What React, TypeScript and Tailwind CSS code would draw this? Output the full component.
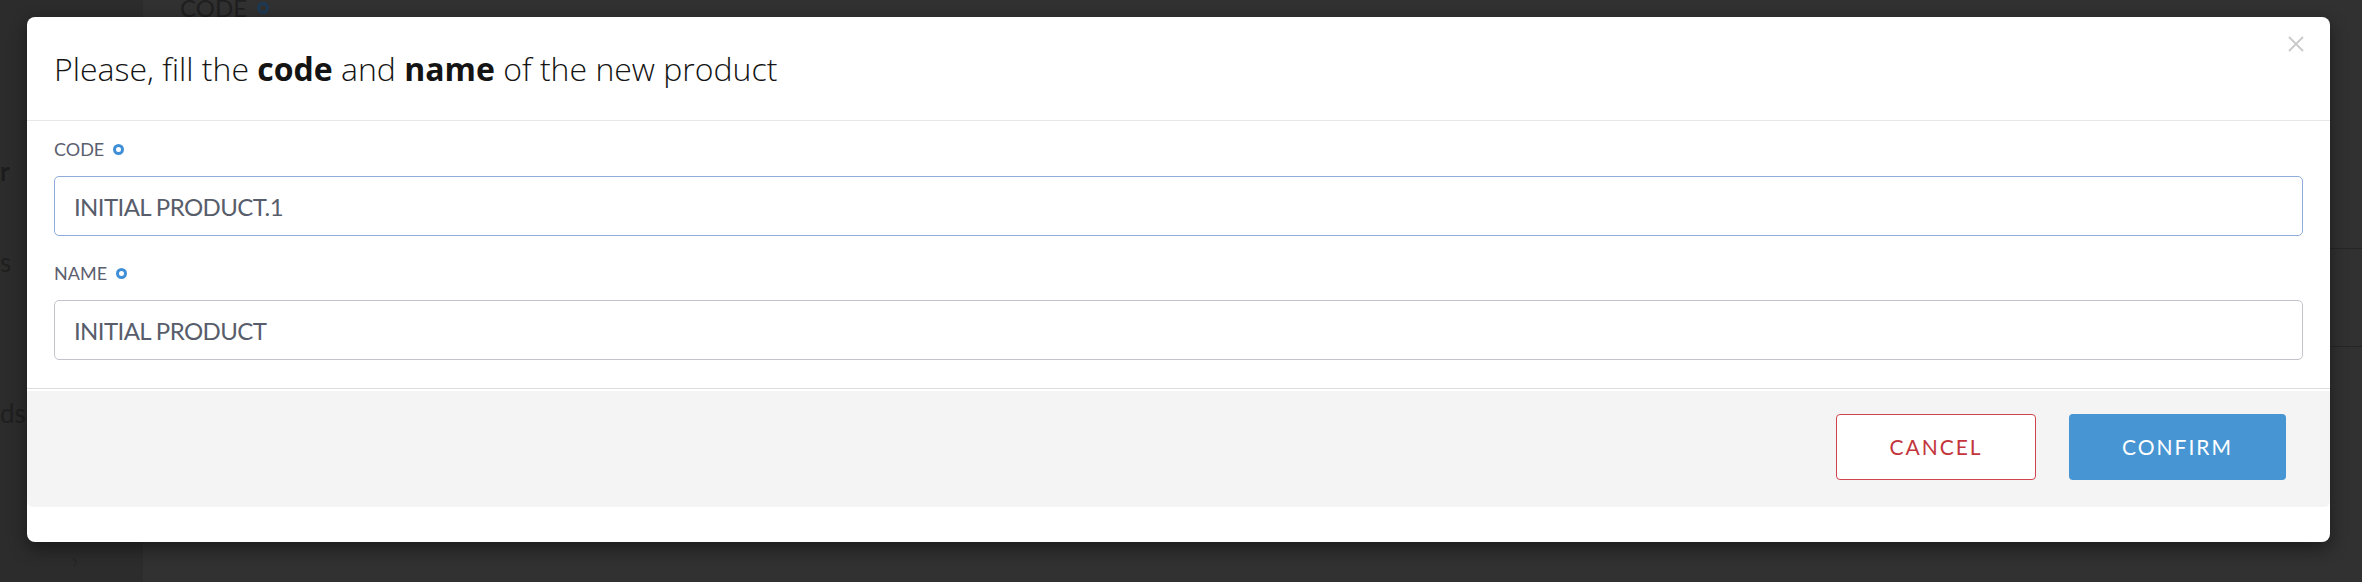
const font = { fontFamily: "Lato, 'Open Sans', sans-serif" };

function RequiredDot() {
  return (
    <span className="ml-[9px] inline-block h-[11px] w-[11px] rounded-full border-[3px] border-[#3f8fd6]" />
  );
}

function Field({
  label,
  value,
  focused,
}: {
  label: string;
  value: string;
  focused?: boolean;
}) {
  return (
    <div className="flex flex-col">
      <label className="flex h-[22px] items-center text-[18px] leading-[22px] text-[#5b6070]">
        {label}
        <RequiredDot />
      </label>
      <input
        readOnly
        value={value}
        className={
          "mt-[16px] h-[60px] w-full rounded-[5px] border bg-white pl-[19px] text-[24px] tracking-[-0.6px] text-[#585d6b] outline-none " +
          (focused ? "border-[#8eabdc]" : "border-[#c3c3cb]")
        }
        style={font}
      />
    </div>
  );
}

export default function App() {
  return (
    <main
      className="relative h-[582px] w-[2362px] overflow-hidden bg-[#313131]"
      style={font}
    >
      {/* page behind the overlay */}
      <div className="flex h-full">
        <div className="h-full w-[143px] bg-[#2c2c2c]">
          <p className="mt-[152px] text-[26px] font-bold text-[#1c1c1c]">r</p>
          <p className="mt-[52px] text-[26px] text-[#1f1f1f]">s</p>
          <p className="mt-[112px] text-[26px] text-[#1f1f1f]">ds</p>
          <p className="ml-[72px] mt-[110px] text-[22px] text-[#262626]">›</p>
        </div>
        <div className="flex h-full flex-1 flex-col">
          <p className="-mt-[6px] ml-[37px] flex items-center text-[24px] leading-[28px] text-[#1f1f1f]">
            CODE
            <span className="ml-[10px] inline-block h-[12px] w-[12px] rounded-full border-[3px] border-[#1d3a55]" />
          </p>
          <div className="mt-[226px] border-t border-[#262626]" />
          <div className="mt-[97px] border-t border-[#262626]" />
        </div>
      </div>

      {/* modal */}
      <div className="absolute left-[27px] top-[17px] flex h-[525px] w-[2303px] flex-col rounded-[8px] bg-white shadow-[0_6px_18px_rgba(0,0,0,0.45)]">
        <header className="relative flex h-[104px] items-center border-b border-[#e8e8e8] px-[27px]">
          <h1
            className="text-[32px] font-light text-[#141414]"
            style={{ fontFamily: "'Open Sans', Lato, sans-serif" }}
          >
            Please, fill the <b className="font-bold">code</b> and{" "}
            <b className="font-bold">name</b> of the new product
          </h1>
          <button className="absolute right-[26px] top-[19px] text-[#cccccc]">
            <svg width="16" height="16" viewBox="0 0 16 16">
              <path
                d="M1 1 L15 15 M15 1 L1 15"
                stroke="currentColor"
                strokeWidth="2"
                fill="none"
              />
            </svg>
          </button>
        </header>

        <section className="flex flex-col gap-[26px] border-b border-[#dddddd] px-[27px] pb-[28px] pt-[17px]">
          <Field label="CODE" value="INITIAL PRODUCT.1" focused />
          <Field label="NAME" value="INITIAL PRODUCT" />
        </section>

        <footer className="mt-[2px] flex h-[116px] items-start justify-end gap-[33px] rounded-b-[6px] bg-[#f4f4f4] pr-[44px] pt-[23px]">
          <button className="h-[66px] w-[200px] rounded-[4px] border border-[#d0434f] bg-white text-[21px] tracking-[2px] text-[#c3353c]">
            CANCEL
          </button>
          <button className="h-[66px] w-[217px] rounded-[4px] bg-[#4795d3] text-[21px] tracking-[2px] text-white">
            CONFIRM
          </button>
        </footer>
      </div>
    </main>
  );
}
